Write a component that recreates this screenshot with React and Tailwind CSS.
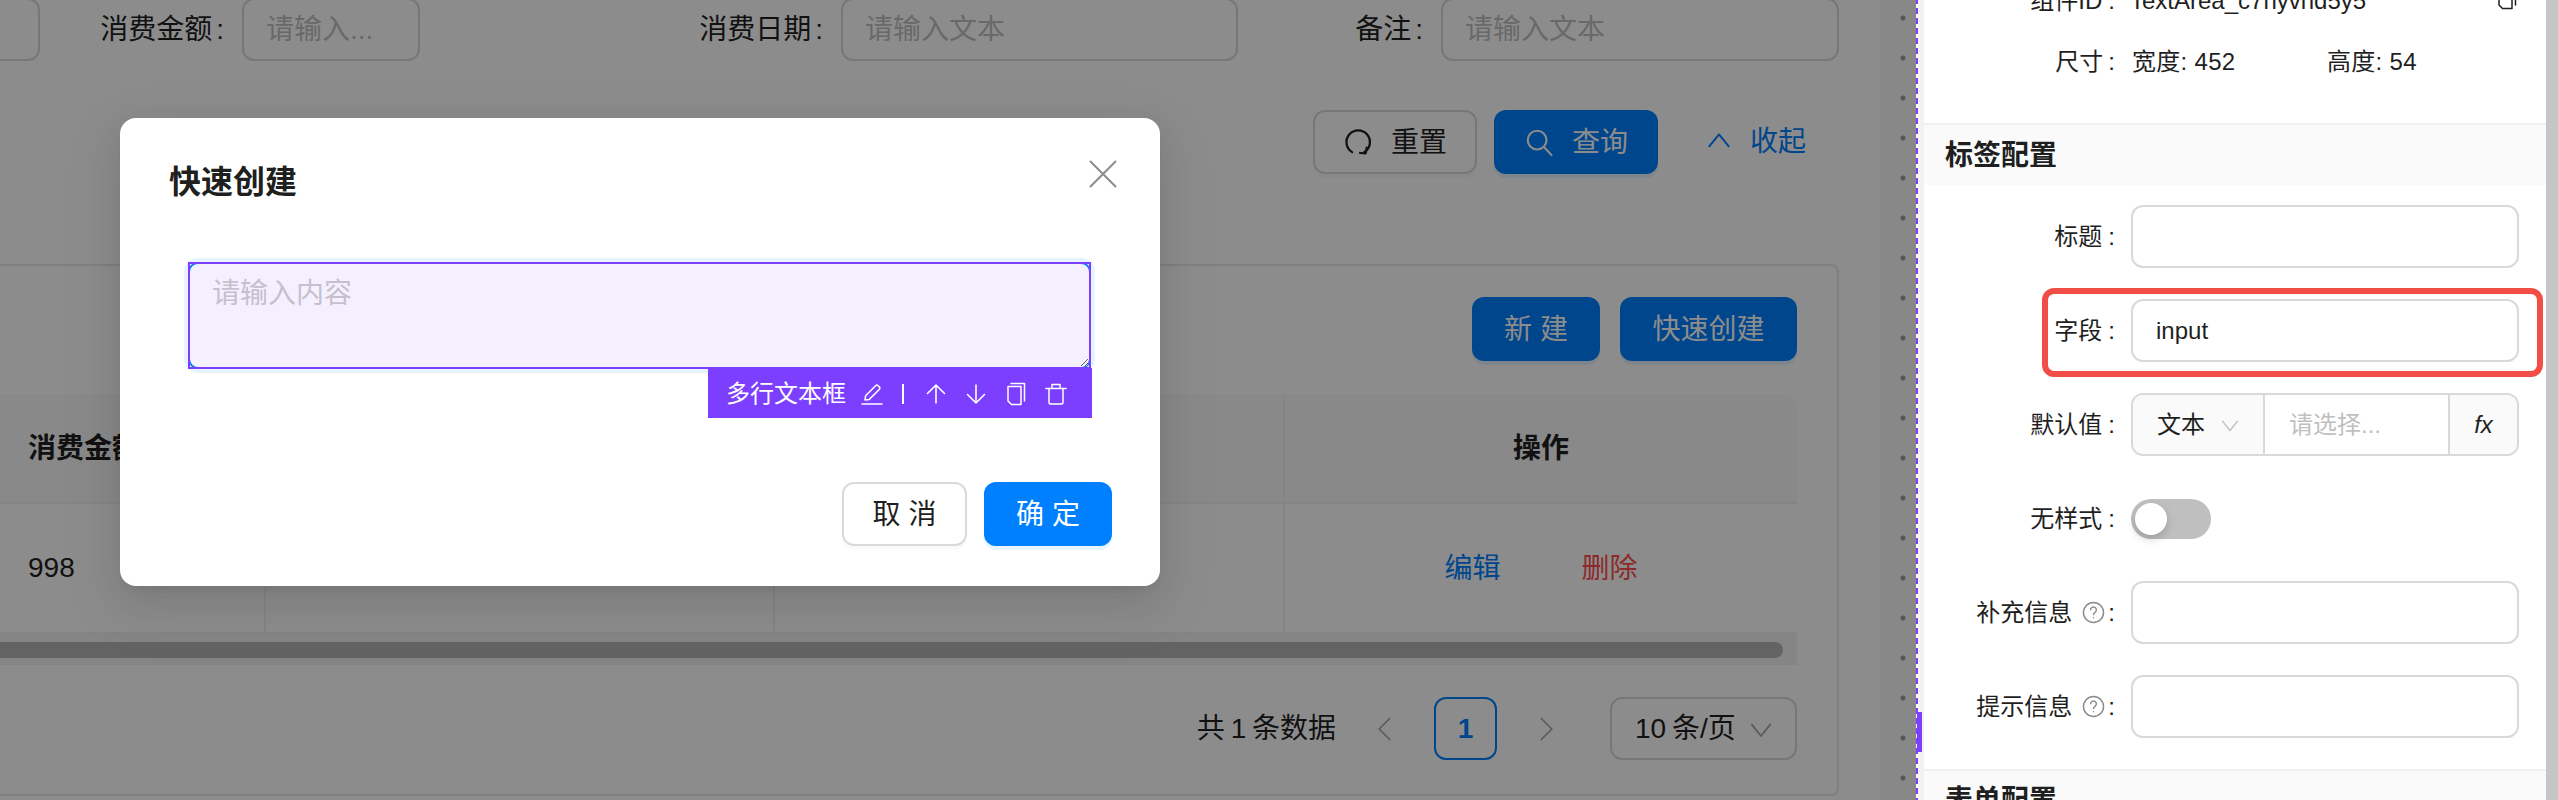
import React from "react";

const Ico = ({ size = 22, sw = 1.7, className = "", children }) => (
  <svg width={size} height={size} viewBox="0 0 24 24" fill="none" stroke="currentColor" strokeWidth={sw} strokeLinecap="round" strokeLinejoin="round" className={"shrink-0 " + className}>
    {children}
  </svg>
);

const Chevron = ({ size = 22, dir = "down", sw = 1.5, className = "" }) => {
  const d = { down: "M4 8l8 10 8-10", up: "M3 16l9-11 9 11", left: "M16 3L7 12l9 9", right: "M8 3l9 9-9 9" }[dir];
  return <Ico size={size} sw={sw} className={className}><path d={d} /></Ico>;
};

const SearchItem = ({ w, label, placeholder, inputW, children }) => (
  <div className={"flex items-center " + w}>
    {children}
    <span className="whitespace-nowrap text-[28px] text-[#1f1f1f]">{label}<span className="ml-[4px]">:</span></span>
    <div className={"ml-[18px] flex h-[63px] items-center rounded-[12px] border-2 border-[#d9d9d9] bg-white pl-[22px] text-[28px] text-[#bfbfbf] " + inputW}>{placeholder}</div>
  </div>
);

const Btn = ({ className = "", children }) => (
  <div className={"flex h-[64px] items-center justify-center rounded-[12px] pt-[2px] text-[28px] " + className}>{children}</div>
);

const Row = ({ label, help, className = "", children }) => (
  <div className={"relative flex h-[63px] items-center " + className}>
    <div className="flex w-[191px] items-center justify-end whitespace-nowrap text-[24px] text-[#1f1f1f]">
      <span>{label}</span>
      {help && <svg width="23" height="23" viewBox="0 0 24 24" fill="none" stroke="#8c8c8c" strokeWidth="1.5" strokeLinecap="round" className="ml-[10px]"><circle cx="12" cy="12" r="10.5" /><path d="M9 9.2a3 3 0 1 1 4.6 2.6c-1 .6-1.6 1.2-1.6 2.4" /><path d="M12 17.4v.2" /></svg>}
      <span className={help ? "ml-[3px]" : "ml-[6px]"}>:</span>
    </div>
    <div className="ml-[16px] w-[388px]">{children}</div>
  </div>
);

const PanelInput = ({ children }) => (
  <div className="flex h-[63px] items-center rounded-[12px] border-2 border-[#d9d9d9] bg-white pl-[23px] text-[24px] text-[#1f1f1f]">{children}</div>
);

const CopyPaths = () => (
  <>
    <path d="M7 1.500h13.500V19" />
    <path d="M4 4.500h13v18H7.500L4 19z" />
  </>
);

export default function App() {
  return (
    <div className="flex h-[800px] w-[2558px] overflow-hidden bg-white font-['Liberation_Sans','Noto_Sans_CJK_SC',sans-serif]">
      <div className="relative flex w-[1916px] shrink-0">
        <main className="w-[1880px] shrink-0 bg-white">
          <div className="flex h-[61px] items-end overflow-hidden">
            <SearchItem w="w-[420px]" inputW="w-[178px]" label="消费金额" placeholder="请输入...">
              <div className="mr-auto h-[63px] w-[40px] rounded-r-[12px] border-2 border-l-0 border-[#d9d9d9]" />
            </SearchItem>
            <SearchItem w="w-[818px] justify-end" inputW="w-[397px]" label="消费日期" placeholder="请输入文本" />
            <SearchItem w="w-[601px] justify-end" inputW="w-[398px]" label="备注" placeholder="请输入文本" />
          </div>

          <div className="mt-[49px] flex w-[1839px] items-center justify-end pr-[33px]">
            <Btn className="w-[164px] gap-[18px] border-2 border-[#d9d9d9] text-[#1f1f1f] shadow-[0_4px_0_rgba(0,0,0,0.02)]">
              <Ico size={30} sw={1.8} className="-mt-[2px]">
                <path d="M7.3 20.1A9.4 9.4 0 1 1 17 20.1" />
                <path d="M19 16.5l-.9 4.6-4.5-.3" />
              </Ico>
              重置
            </Btn>
            <Btn className="ml-[17px] w-[164px] gap-[18px] bg-[#0080ff] text-white shadow-[0_4px_0_rgba(5,145,255,0.1)]">
              <Ico size={30} sw={1.7} className="-mt-[2px]">
                <circle cx="10.5" cy="10.5" r="7.5" />
                <path d="M16 16l6 6.5" />
              </Ico>
              查询
            </Btn>
            <div className="ml-[48px] flex items-center gap-[18px] text-[28px] text-[#0080ff]">
              <Chevron size={26} dir="up" sw={1.8} />
              收起
            </div>
          </div>

          <section className="mt-[90px] -ml-[20px] h-[532px] w-[1859px] rounded-[8px] border-2 border-[#e8e8e8] pt-[31px] pl-[18px]">
            <div className="flex w-[1797px] justify-end gap-[20px]">
              <Btn className="w-[128px] bg-[#0080ff] text-white shadow-[0_4px_0_rgba(5,145,255,0.1)]">新 建</Btn>
              <Btn className="w-[177px] bg-[#0080ff] text-white shadow-[0_4px_0_rgba(5,145,255,0.1)]">快速创建</Btn>
            </div>

            <div className="mt-[33px] w-[1797px] text-[28px] text-[#1f1f1f]">
              <div className="grid h-[110px] grid-cols-[266px_509px_510px_512px] rounded-tr-[16px] border-b-2 border-[#f0f0f0] bg-[#fafafa] font-semibold">
                <div className="flex items-center border-r-2 border-[#f0f0f0] pl-[28px] pt-[2px]">消费金额</div>
                <div className="border-r-2 border-[#f0f0f0]" />
                <div className="border-r-2 border-[#f0f0f0]" />
                <div className="flex items-center justify-center pt-[2px]">操作</div>
              </div>
              <div className="grid h-[130px] grid-cols-[266px_509px_510px_512px] border-b-2 border-[#f0f0f0]">
                <div className="flex items-center border-r-2 border-[#f0f0f0] pl-[28px]">998</div>
                <div className="border-r-2 border-[#f0f0f0]" />
                <div className="border-r-2 border-[#f0f0f0]" />
                <div className="flex items-center justify-center gap-[81px] pt-[2px]">
                  <span className="text-[#0080ff]">编辑</span>
                  <span className="text-[#ff4d4f]">删除</span>
                </div>
              </div>
              <div className="flex h-[31px] items-center bg-[#f2f2f2] pr-[14px]">
                <div className="h-[16px] w-full rounded-r-[8px] bg-[#b4b4b4]" />
              </div>
            </div>

            <div className="mt-[32px] flex h-[63px] w-[1797px] items-center justify-end text-[28px] text-[#1f1f1f]">
              <span className="[word-spacing:-2px]">共 1 条数据</span>
              <Chevron size={28} dir="left" className="ml-[35px] text-[#a6a6a6]" />
              <div className="ml-[35px] flex h-[63px] w-[63px] items-center justify-center rounded-[12px] border-2 border-[#0080ff] font-bold text-[#0080ff]">1</div>
              <Chevron size={28} dir="right" className="ml-[35px] text-[#a6a6a6]" />
              <div className="ml-[50px] flex h-[63px] w-[187px] items-center rounded-[12px] border-2 border-[#d9d9d9] pl-[23px]">
                <span className="[word-spacing:-2px]">10 条/页</span>
                <Chevron size={28} className="ml-[11px] text-[#a6a6a6]" />
              </div>
            </div>
          </section>
        </main>

        <div className="h-full w-[36px] shrink-0 bg-[#f8f8f8] bg-[radial-gradient(circle,#9b9b9b_2px,transparent_3px)] bg-[length:40px_40px] bg-[position:3px_-2px]" />

        <div className="absolute inset-0 bg-black/45" />

        <div className="absolute left-[120px] top-[118px] h-[468px] w-[1040px] rounded-[16px] bg-white pt-[44px] shadow-[0_12px_32px_0_rgba(0,0,0,0.08),0_6px_12px_-8px_rgba(0,0,0,0.12),0_18px_56px_16px_rgba(0,0,0,0.05)]">
          <div className="flex h-[40px] items-center pl-[49px] text-[32px] font-semibold leading-none text-[#1f1f1f]">快速创建</div>
          <div className="absolute right-[43px] top-[42px] text-[#8c8c8c]">
            <svg width="28" height="28" viewBox="0 0 28 28" fill="none" stroke="currentColor" strokeWidth="2"><path d="M1 1l26 26M27 1L1 27" /></svg>
          </div>
          <div className="relative ml-[68px] mt-[60px] h-[107px] w-[903px]">
            <textarea readOnly placeholder="请输入内容" className="block h-full w-full resize-y rounded-[10px] border-2 border-[#1677ff] bg-[#f4f0ff] px-[22px] py-[9px] text-[28px] outline-none shadow-[0_0_0_4px_#e6f4ff] placeholder:text-[#c5c0cc]" />
            <div className="pointer-events-none absolute inset-0 border-2 border-[#7c3fff]" />
            <div className="absolute right-[-1px] top-[106px] flex h-[50px] w-[384px] items-center bg-[#7c3fff] pl-[18px] pt-[2px] text-[24px] text-white">
              <span className="whitespace-nowrap">多行文本框</span>
              <Ico size={24} sw={1.5} className="ml-[14px]">
                <path d="M2 22h20" />
                <path d="M5 18l.6-4.3L15.8 3.5a1.5 1.5 0 0 1 2.1 0l1.6 1.6a1.5 1.5 0 0 1 0 2.1L9.300 17.400z" />
              </Ico>
              <div className="ml-[18px] h-[20px] w-[2px] bg-white" />
              <Ico size={24} sw={1.6} className="ml-[20px]"><path d="M12 21V3M3.500 11.500L12 3l8.500 8.500" /></Ico>
              <Ico size={24} sw={1.6} className="ml-[16px]"><path d="M12 3v18M3.500 12.500L12 21l8.500-8.500" /></Ico>
              <Ico size={24} sw={1.5} className="ml-[16px]"><CopyPaths /></Ico>
              <Ico size={24} sw={1.5} className="ml-[16px]">
                <path d="M2 6.500h20" />
                <path d="M8 6.500V2.500h8v4" />
                <path d="M5 6.500v14a1.500 1.500 0 0 0 1.500 1.500h11a1.500 1.500 0 0 0 1.500-1.500v-14" />
              </Ico>
            </div>
          </div>
          <div className="mt-[113px] flex justify-end gap-[17px] pr-[48px]">
            <Btn className="w-[125px] rounded-[10px] border-2 border-[#d9d9d9] text-[#1f1f1f] shadow-[0_4px_0_rgba(0,0,0,0.02)]">取 消</Btn>
            <Btn className="w-[128px] rounded-[10px] bg-[#0080ff] text-white shadow-[0_4px_0_rgba(5,145,255,0.1)]">确 定</Btn>
          </div>
        </div>
      </div>

      <div className="h-full w-[2px] shrink-0 bg-[repeating-linear-gradient(to_bottom,#7c3fff_0,#7c3fff_4px,transparent_4px,transparent_8px,#7c3fff_8px,#7c3fff_10px)]" />

      <aside className="relative h-full w-[628px] shrink-0 overflow-hidden border-l-[6px] border-[#f2f2f2] bg-white">
        <div className="-mt-[29px] flex h-[60px] items-center text-[24px] text-[#1f1f1f]">
          <div className="w-[191px] text-right">组件ID<span className="ml-[6px]">:</span></div>
          <span className="ml-[15px]">TextArea_c7nyvhd5y5</span>
          <Ico size={24} sw={1.5} className="absolute left-[571px] -top-[14px]"><CopyPaths /></Ico>
        </div>
        <div className="flex h-[62px] items-center text-[24px] text-[#1f1f1f]">
          <div className="w-[191px] text-right">尺寸<span className="ml-[5px]">:</span></div>
          <span className="ml-[17px] w-[195px] tracking-[0.3px]">宽度: 452</span>
          <span className="tracking-[0.3px]">高度: 54</span>
        </div>

        <div className="mt-[30px] flex h-[62px] items-center border-t-2 border-[#f0f0f0] bg-[#fafafa] pl-[21px] pt-[1px] text-[28px] font-semibold text-[#1f1f1f]">标签配置</div>

        <div className="flex flex-col gap-[31px] pb-[31px] pt-[20px]">
          <Row label="标题"><PanelInput /></Row>
          <Row label="字段">
            <PanelInput>input</PanelInput>
            <div className="pointer-events-none absolute -top-[11px] left-[118px] h-[89px] w-[501px] rounded-[12px] border-[6px] border-[#f24e45]" />
          </Row>
          <Row label="默认值">
            <div className="flex h-[63px] items-stretch overflow-hidden rounded-[12px] border-2 border-[#d9d9d9] bg-white text-[24px]">
              <div className="flex w-[132px] items-center border-r-2 border-[#d9d9d9] bg-[#fafafa] pl-[24px] text-[#1f1f1f]">
                <span>文本</span>
                <Chevron size={22} className="ml-[14px] text-[#bfbfbf]" />
              </div>
              <div className="flex flex-1 items-center pl-[24px] text-[#bfbfbf]">请选择...</div>
              <div className="flex w-[69px] items-center justify-center border-l-2 border-[#d9d9d9] bg-[#fafafa] italic text-[#1f1f1f]">fx</div>
            </div>
          </Row>
          <Row label="无样式">
            <div className="flex h-[40px] w-[80px] items-center rounded-full bg-[#bfbfbf] pl-[4px]">
              <div className="h-[32px] w-[32px] rounded-full bg-white shadow-[0_4px_8px_rgba(0,35,11,0.2)]" />
            </div>
          </Row>
          <Row label="补充信息" help><PanelInput /></Row>
          <Row label="提示信息" help><PanelInput /></Row>
        </div>

        <div className="flex h-[62px] items-center border-t-2 border-[#f0f0f0] bg-[#fafafa] pl-[21px] text-[28px] font-semibold text-[#1f1f1f]">表单配置</div>
      </aside>

      <div className="h-full w-[12px] shrink-0 bg-[#c6c6c6]" />

      <div className="absolute left-[1917px] top-[712px] h-[40px] w-[5px] bg-[#7c3fff]" />
    </div>
  );
}
